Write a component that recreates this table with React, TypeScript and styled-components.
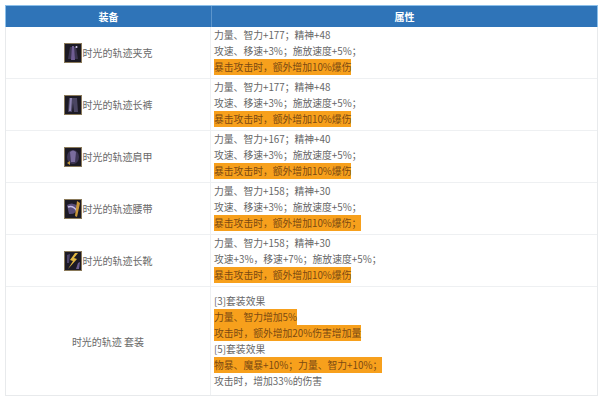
import React from 'react';
import styled, { createGlobalStyle } from 'styled-components';

const GlobalStyle = createGlobalStyle`
  html, body {
    margin: 0;
    background: #ffffff;
  }
  body {
    padding: 5px 7px 0 5px;
    font-family: "Noto Sans CJK SC", "Noto Sans", sans-serif;
  }
`;

const Table = styled.div`
  width: 593px;
  border: 1px solid #e8eaec;
  border-top: none;
  box-sizing: border-box;
  display: flex;
  flex-direction: column;
`;

const Row = styled.div`
  display: grid;
  grid-template-columns: 205px 1fr;
  border-bottom: 1px solid #eef0f2;

  &:last-child {
    border-bottom: none;
  }
`;

const HeaderRow = styled(Row)`
  background: #2f74b8;
  height: 22px;
  border: 1px solid #8cc0ea;
  margin: 0 -1px;
  box-sizing: border-box;
  border-bottom: none;
`;

const HeadCell = styled.div`
  display: flex;
  align-items: center;
  justify-content: center;
  color: #ffffff;
  font-size: 10px;
  font-weight: 700;
  & + & {
    border-left: 1px solid #5c95cc;
  }
`;

const NameCell = styled.div`
  display: flex;
  align-items: center;
  justify-content: center;
  border-right: 1px solid #eef0f2;
  font-size: 10px;
  color: #6a6a6a;
`;

const AttrCell = styled.div<{ $tall?: boolean }>`
  display: flex;
  flex-direction: column;
  align-items: flex-start;
  padding: ${(p) => (p.$tall ? '6px 4px 6px 3px' : '0 4px 3px 3px')};
  font-size: 9.8px;
  line-height: 16px;
  color: #666666;
  white-space: nowrap;
`;

const Line = styled.div``;

const Mark = styled.span`
  background: #f7a01c;
  color: #7b4a12;
  padding: 1px 0;
`;

const IconBox = styled.svg`
  width: 18px;
  height: 20px;
  flex: none;
  margin-right: 1px;
`;

type Kind = 'jacket' | 'pants' | 'shoulder' | 'belt' | 'boots';

const ItemIcon: React.FC<{ kind: Kind }> = ({ kind }) => (
  <IconBox viewBox="0 0 18 20">
    <rect x="0.5" y="0.5" width="17" height="19" fill="#1c1a24" stroke="#8a7a5a" strokeWidth="1" />
    {kind === 'jacket' && (
      <>
        <path d="M6 4 L12 4 L14 16 L4 16 Z" fill="#3b3450" />
        <path d="M8 3 L10 3 L11 17 L7 17 Z" fill="#6f5d93" />
        <circle cx="12.5" cy="4" r="1" fill="#d8d0f0" />
      </>
    )}
    {kind === 'pants' && (
      <>
        <path d="M5 3 L13 3 L14 17 L10 17 L9 8 L8 17 L4 17 Z" fill="#4a4562" />
        <path d="M6 3 L8 3 L7 16 L5 16 Z" fill="#8e84b2" />
      </>
    )}
    {kind === 'shoulder' && (
      <>
        <ellipse cx="9" cy="10" rx="6" ry="7" fill="#3e3656" />
        <path d="M6 5 Q9 2 12 5 L11 15 L7 15 Z" fill="#7a6c9e" />
        <path d="M3 16 L6 14 L6 18 Z" fill="#c69a3c" />
      </>
    )}
    {kind === 'belt' && (
      <>
        <path d="M3 6 Q9 2 15 8 Q12 16 5 15 Z" fill="#5a4e7a" />
        <path d="M4 8 Q9 6 13 12" stroke="#c8c0e8" strokeWidth="1.5" fill="none" />
        <path d="M13 2 L16 4 L13 18 L11 17 Z" fill="#c9973a" />
      </>
    )}
    {kind === 'boots' && (
      <>
        <path d="M11 2 L6 9 L9 10 L4 18 L13 8 L10 7 L14 2 Z" fill="#e0b640" />
        <path d="M3 4 L6 3 L5 12 L3 12 Z" fill="#4c4468" />
        <path d="M14 12 L16 11 L15 18 L12 18 Z" fill="#6a5e90" />
      </>
    )}
  </IconBox>
);

type Item = {
  name: string;
  kind: Kind;
  lines: string[];
  mark: string;
};

const items: Item[] = [
  {
    name: '时光的轨迹夹克',
    kind: 'jacket',
    lines: ['力量、智力+177；精神+48', '攻速、移速+3%；施放速度+5%；'],
    mark: '暴击攻击时，额外增加10%爆伤',
  },
  {
    name: '时光的轨迹长裤',
    kind: 'pants',
    lines: ['力量、智力+177；精神+48', '攻速、移速+3%；施放速度+5%；'],
    mark: '暴击攻击时，额外增加10%爆伤',
  },
  {
    name: '时光的轨迹肩甲',
    kind: 'shoulder',
    lines: ['力量、智力+167；精神+40', '攻速、移速+3%；施放速度+5%；'],
    mark: '暴击攻击时，额外增加10%爆伤',
  },
  {
    name: '时光的轨迹腰带',
    kind: 'belt',
    lines: ['力量、智力+158；精神+30', '攻速、移速+3%；施放速度+5%；'],
    mark: '暴击攻击时，额外增加10%爆伤；',
  },
  {
    name: '时光的轨迹长靴',
    kind: 'boots',
    lines: ['力量、智力+158；精神+30', '攻速+3%，移速+7%；施放速度+5%；'],
    mark: '暴击攻击时，额外增加10%爆伤',
  },
];

const setLines: { text: string; mark?: boolean }[] = [
  { text: '[3]套装效果' },
  { text: '力量、智力增加5%', mark: true },
  { text: '攻击时，额外增加20%伤害增加量', mark: true },
  { text: '[5]套装效果' },
  { text: '物暴、魔暴+10%；力量、智力+10%；', mark: true },
  { text: '攻击时，增加33%的伤害' },
];

export default function App() {
  return (
    <>
      <GlobalStyle />
      <Table>
        <HeaderRow>
          <HeadCell>装备</HeadCell>
          <HeadCell>属性</HeadCell>
        </HeaderRow>
        {items.map((it) => (
          <Row key={it.name}>
            <NameCell>
              <ItemIcon kind={it.kind} />
              {it.name}
            </NameCell>
            <AttrCell>
              {it.lines.map((l) => (
                <Line key={l}>{l}</Line>
              ))}
              <Line>
                <Mark>{it.mark}</Mark>
              </Line>
            </AttrCell>
          </Row>
        ))}
        <Row>
          <NameCell>时光的轨迹 套装</NameCell>
          <AttrCell $tall>
            {setLines.map((l) => (
              <Line key={l.text}>{l.mark ? <Mark>{l.text}</Mark> : l.text}</Line>
            ))}
          </AttrCell>
        </Row>
      </Table>
    </>
  );
}
